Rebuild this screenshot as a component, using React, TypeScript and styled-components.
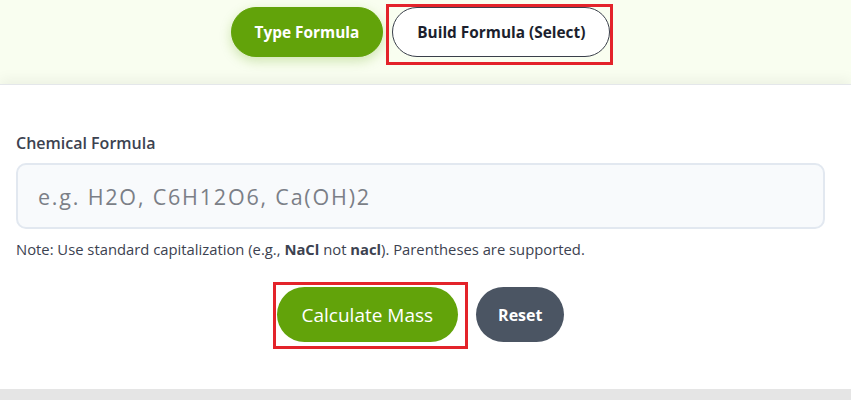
import styled, { createGlobalStyle } from "styled-components";

const GlobalStyle = createGlobalStyle`
  body {
    margin: 0;
    background-color: #f9fef0;
    font-family: "Open Sans", "Noto Sans", "Liberation Sans", sans-serif;
  }
`;

const Page = styled.div`
  width: 851px;
  height: 400px;
  display: flex;
  flex-direction: column;
  overflow: hidden;
`;

const ModeBar = styled.div`
  height: 84px;
  flex-shrink: 0;
  display: flex;
  justify-content: center;
  align-items: flex-start;
  gap: 9px;
  padding: 7px 10px 0 0;
  box-sizing: border-box;
`;

const Highlight = styled.span<{ $inset: string }>`
  position: relative;
  display: inline-flex;

  &::after {
    content: "";
    position: absolute;
    inset: ${(props) => props.$inset};
    border: 3px solid #e3232a;
    pointer-events: none;
  }
`;

const ModeButton = styled.button<{ $active?: boolean }>`
  height: 50px;
  padding: ${(props) => (props.$active ? "0 23px" : "0 24px")};
  border-radius: 25px;
  font-family: inherit;
  font-size: 15.4px;
  font-weight: 700;
  cursor: pointer;
  border: 1px solid ${(props) => (props.$active ? "#62a30a" : "#3a3f4b")};
  background-color: ${(props) => (props.$active ? "#62a30a" : "#ffffff")};
  color: ${(props) => (props.$active ? "#ffffff" : "#1c1f2e")};
  box-shadow: ${(props) =>
    props.$active ? "0 4px 12px rgba(98, 163, 10, 0.28)" : "none"};
`;

const Card = styled.section`
  flex: 1;
  background-color: #ffffff;
  border-top: 1px solid #e4e7ea;
  box-shadow: 0 -5px 12px rgba(0, 0, 0, 0.05);
  padding: 47px 26px 0 16px;
  display: flex;
  flex-direction: column;
  max-height: 305px;
  box-sizing: border-box;
`;

const Label = styled.label`
  font-size: 16px;
  font-weight: 600;
  color: #3c4250;
  margin-bottom: 9px;
`;

const FormulaInput = styled.input`
  height: 66px;
  box-sizing: border-box;
  border: 2px solid #e2e8f0;
  border-radius: 10px;
  background-color: #f8fafc;
  padding: 0 20px;
  font-family: inherit;
  font-size: 21.5px;
  letter-spacing: 1.8px;
  color: #1f2937;
  outline: none;

  &::placeholder {
    color: #7b7f87;
  }
`;

const Note = styled.p`
  margin: 10px 0 0;
  font-size: 14.8px;
  color: #3c4250;

  b {
    font-weight: 700;
  }
`;

const Actions = styled.div`
  display: flex;
  justify-content: center;
  align-items: center;
  gap: 18px;
  margin-top: 28px;
`;

const ActionButton = styled.button<{ $kind: "primary" | "muted" }>`
  height: 55px;
  border: none;
  border-radius: 28px;
  font-family: inherit;
  color: #ffffff;
  cursor: pointer;
  padding: ${(props) => (props.$kind === "primary" ? "0 25px" : "0 22px")};
  font-size: ${(props) => (props.$kind === "primary" ? "19px" : "16px")};
  font-weight: ${(props) => (props.$kind === "primary" ? 400 : 700)};
  background-color: ${(props) =>
    props.$kind === "primary" ? "#62a30a" : "#4b5563"};
`;

const Footer = styled.div`
  height: 11px;
  flex-shrink: 0;
  background-color: #e5e5e5;
`;

export default function App() {
  return (
    <>
      <GlobalStyle />
      <Page>
        <ModeBar>
          <ModeButton $active>Type Formula</ModeButton>
          <Highlight $inset="-3px -3px -8px -6px">
            <ModeButton>Build Formula (Select)</ModeButton>
          </Highlight>
        </ModeBar>
        <Card>
          <Label htmlFor="formula">Chemical Formula</Label>
          <FormulaInput
            id="formula"
            placeholder="e.g. H2O, C6H12O6, Ca(OH)2"
          />
          <Note>
            Note: Use standard capitalization (e.g., <b>NaCl</b> not{" "}
            <b>nacl</b>). Parentheses are supported.
          </Note>
          <Actions>
            <Highlight $inset="-5px -10px -7px -4px">
              <ActionButton $kind="primary">Calculate Mass</ActionButton>
            </Highlight>
            <ActionButton $kind="muted">Reset</ActionButton>
          </Actions>
        </Card>
        <Footer />
      </Page>
    </>
  );
}
